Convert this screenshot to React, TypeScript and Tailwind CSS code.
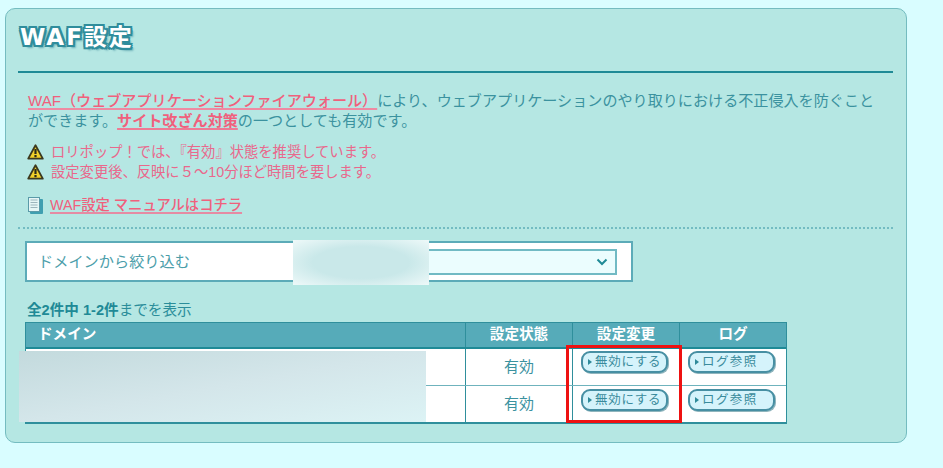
const cjk = "font-['Liberation_Sans','Noto_Sans_CJK_JP',sans-serif]";

function Warn() {
  return (
    <svg width="17" height="16" viewBox="0 0 17 16" className="shrink-0">
      <path d="M8.5 1.2 L15.8 14.6 H1.2 Z" fill="#f0d02a" stroke="#3c3a20" strokeWidth="1.8" strokeLinejoin="round" />
      <path d="M8.5 5 V10" stroke="#2a2a1a" strokeWidth="2.2" />
      <rect x="7.4" y="11" width="2.2" height="2.2" fill="#2a2a1a" />
    </svg>
  );
}

function Doc() {
  return (
    <svg width="17" height="19" viewBox="0 0 17 19" className="shrink-0">
      <rect x="3" y="3" width="13" height="15" rx="1" fill="#3f9fb0" />
      <rect x="1.5" y="1.5" width="11" height="14" fill="#e6f6f6" stroke="#5a9aa8" />
      <path d="M3.5 4H10.5M3.5 6.5H10.5M3.5 9H10.5M3.5 11.5H10.5" stroke="#9cb4bc" strokeWidth="1" />
    </svg>
  );
}

function Btn({ label, gap }: { label: string; gap: string }) {
  return (
    <button className={`w-[87px] h-[22px] rounded-[9px] border-2 border-[#478fa3] bg-[#d5f3fb] shadow-[1px_1px_0_#8fb5bd] flex items-center pl-[5px] text-[12.5px] leading-none text-[#3a8b9c] whitespace-nowrap ${gap}`}>
      <span className="w-0 h-0 mr-[3px] border-y-[3px] border-y-transparent border-l-[4px] border-l-[#2f8a9a]" />
      {label}
    </button>
  );
}

function Row({ last }: { last?: boolean }) {
  return (
    <div className={`flex bg-white ${last ? "h-[36px]" : "h-[37px] border-b border-[#6fb3bd]"}`}>
      <div className="w-[440px] border-r border-[#2f8f9c]" />
      <div className="w-[107px] border-r border-[#2f8f9c] flex items-center justify-center text-[15px] text-[#3b929f]">有効</div>
      <div className={`w-[107px] border-r border-[#2f8f9c] pl-[8px] ${last ? "pt-[3px]" : "pt-[2px]"}`}><Btn label="無効にする" gap="tracking-[0.7px]" /></div>
      <div className={`flex-1 pl-[8px] ${last ? "pt-[3px]" : "pt-[2px]"}`}><Btn label="ログ参照" gap="tracking-[1.4px]" /></div>
    </div>
  );
}

export default function App() {
  return (
    <div className={`${cjk} w-[943px] h-[468px] bg-[#d9fdff] pt-[8px] pl-[5px] overflow-hidden`}>
      <div className="relative w-[902px] h-[435px] bg-[#b5e7e3] border border-[#74bcc0] rounded-[10px] pl-[12px] pr-[13px] pt-[12px]">
        <h1 className="h-[30px] pt-[1px] pl-[2px] font-['DejaVu_Sans','Noto_Sans_CJK_JP',sans-serif] text-[23px] leading-[30px] font-bold text-white tracking-[2px] [text-shadow:-2px_-2px_0_#2f8d9c,2px_-2px_0_#2f8d9c,-2px_2px_0_#2f8d9c,2px_2px_0_#2f8d9c,0_-2px_0_#2f8d9c,0_2px_0_#2f8d9c,-2px_0_0_#2f8d9c,2px_0_0_#2f8d9c,3px_3px_2px_#6aaeb6]">
          WAF設定
        </h1>
        <div className="mt-[20px] h-[2px] bg-[#1f8a96]" />

        <p className="mt-[18px] pl-[10px] text-[15.1px] leading-[20px] text-[#3b929f] whitespace-nowrap">
          <span className="font-medium text-[#f0607c] underline decoration-2 decoration-[#ee8aa2] underline-offset-2">WAF（ウェブアプリケーションファイアウォール）</span>
          により、ウェブアプリケーションのやり取りにおける不正侵入を防ぐこと
          <br />
          ができます。
          <span className="font-bold text-[#f0607c] underline decoration-2 decoration-[#ee7a94] underline-offset-2">サイト改ざん対策</span>
          の一つとしても有効です。
        </p>

        <div className="mt-[12px] pl-[9px] flex flex-col gap-[2px] text-[14.3px] leading-[18px] text-[#e9688c]">
          <div className="flex items-center gap-[7px]"><Warn /><span>ロリポップ！では、『有効』状態を推奨しています。</span></div>
          <div className="flex items-center gap-[7px]"><Warn /><span>設定変更後、反映に５～10分ほど時間を要します。</span></div>
        </div>

        <div className="mt-[14px] pl-[9px] flex items-center gap-[6px] text-[14.3px] leading-[20px] font-medium text-[#f0607c]">
          <Doc />
          <span className="underline decoration-2 decoration-[#e58ba3] underline-offset-2">WAF設定 マニュアルはコチラ</span>
        </div>

        <div className="mt-[12px] border-t-2 border-dotted border-[#73bcc2]" />

        <div className="mt-[12px] ml-[7px] w-[608px] h-[41px] bg-white border-2 border-[#5cabb8] flex items-center pl-[11px] pr-[14px]">
          <span className="w-[262px] text-[15.2px] pt-[1px] text-[#4c9eaa]">ドメインから絞り込む</span>
          <div className="flex-1 h-[26px] border-2 border-[#71bac4] bg-[#ebfdfe] flex items-center justify-end pr-[7px]">
            <svg width="12" height="8" viewBox="0 0 12 8"><path d="M1.5 1.5 L6 6 L10.5 1.5" fill="none" stroke="#1f8a96" strokeWidth="2" /></svg>
          </div>
        </div>

        <p className="mt-[20px] pl-[9px] text-[14.6px] leading-[16px] text-[#2a8d9a]"><b className="text-[#1f8a96]">全2件中 1-2件</b>までを表示</p>

        <div className="mt-[4px] ml-[7px] w-[762px] border border-[#2f8f9c] border-b-2">
          <div className="flex h-[26px] bg-[#56abb9] border-b-2 border-[#1f8a96] text-white font-bold text-[14.6px] leading-[22px]">
            <div className="w-[440px] border-r border-[#2f8f9c] pl-[12px]">ドメイン</div>
            <div className="w-[107px] border-r border-[#2f8f9c] text-center">設定状態</div>
            <div className="w-[107px] border-r border-[#2f8f9c] text-center">設定変更</div>
            <div className="flex-1 text-center">ログ</div>
          </div>
          <Row />
          <Row last />
        </div>

        {/* blurred-out areas and the red highlight lie over the content */}
        <div className="absolute left-[287px] top-[231px] w-[136px] h-[45px] bg-[radial-gradient(ellipse_at_center,#c9e8e9_50%,#eef9f9_100%)]" />
        <div className="absolute left-[13px] top-[342px] w-[407px] h-[71px] bg-[linear-gradient(170deg,#c3dadd_0%,#d4e6ea_50%,#dcf3f5_100%)]" />
        <div className="absolute left-[560px] top-[336px] w-[116px] h-[78px] border-[3px] border-[#ee1111]" />
      </div>
    </div>
  );
}
